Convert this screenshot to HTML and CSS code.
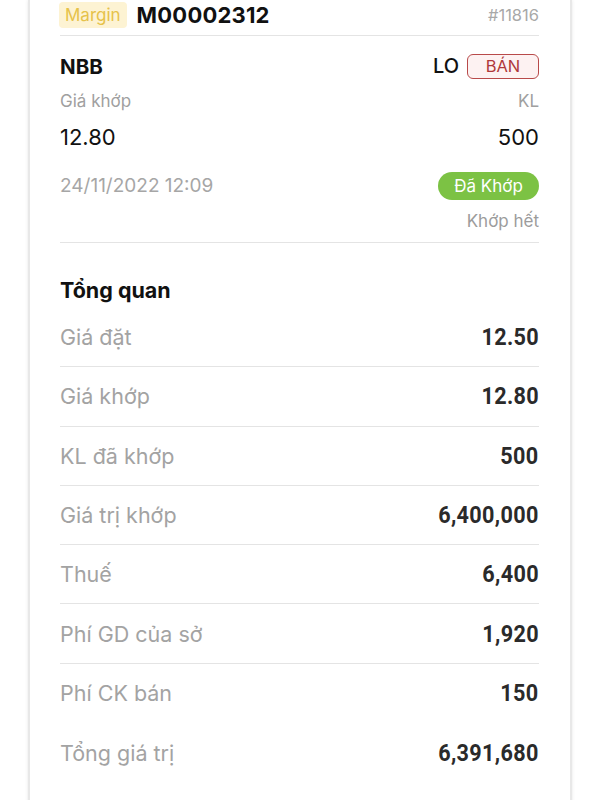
FILE: index.html
```html
<!DOCTYPE html>
<html lang="vi">
<head>
<meta charset="utf-8">
<link rel="stylesheet" href="styles.css">
</head>
<body>
<div class="card">
  <div class="head">
    <div class="head-left">
      <span class="tag-margin">Margin</span>
      <span class="order-id">M00002312</span>
    </div>
    <span class="order-no">#11816</span>
  </div>

  <div class="line sym-row">
    <span class="symbol">NBB</span>
    <div class="side">
      <span class="otype">LO</span>
      <span class="sell">BÁN</span>
    </div>
  </div>
  <div class="line cap-row">
    <span>Giá khớp</span>
    <span>KL</span>
  </div>
  <div class="line num-row">
    <span>12.80</span>
    <span>500</span>
  </div>
  <div class="line date-row">
    <span class="date">24/11/2022 12:09</span>
    <span class="pill">Đã Khớp</span>
  </div>
  <div class="line sub-row">
    <span></span>
    <span>Khớp hết</span>
  </div>

  <div class="overview">
    <h2 class="title">Tổng quan</h2>
    <div class="row"><span class="k">Giá đặt</span><span class="v">12.50</span></div>
    <div class="row"><span class="k">Giá khớp</span><span class="v">12.80</span></div>
    <div class="row"><span class="k">KL đã khớp</span><span class="v">500</span></div>
    <div class="row"><span class="k">Giá trị khớp</span><span class="v">6,400,000</span></div>
    <div class="row"><span class="k">Thuế</span><span class="v">6,400</span></div>
    <div class="row"><span class="k">Phí GD của sở</span><span class="v">1,920</span></div>
    <div class="row noline"><span class="k">Phí CK bán</span><span class="v">150</span></div>
    <div class="row noline"><span class="k">Tổng giá trị</span><span class="v">6,391,680</span></div>
  </div>
</div>
</body>
</html>
```

FILE: styles.css
```css
* { box-sizing: border-box; }
html, body {
  margin: 0;
  padding: 0;
  background: #ffffff;
  overflow: hidden;
}
body {
  font-family: Inter, "Noto Sans", sans-serif;
  color: #111;
}
.card {
  margin: 0 28px 0 28px;
  padding: 0 31px 0 30px;
  height: 820px;
  border-left: 2px solid #e8e8e8;
  border-right: 2px solid #e8e8e8;
  box-shadow: -1px 0 3px rgba(0,0,0,0.05), 1px 0 3px rgba(0,0,0,0.05);
  background: #fff;
}
.head {
  height: 36px;
  display: flex;
  justify-content: space-between;
  align-items: center;
  border-bottom: 1px solid #e4e4e4;
  padding-bottom: 6px;
}
.head-left { display: flex; align-items: center; gap: 10px; }
.tag-margin {
  background: #fdf3d3;
  color: #e6c24a;
  font-size: 17px;
  padding: 2px 6px;
  border-radius: 4px;
  line-height: 22px;
  margin-left: -1px;
}
.order-id {
  font-weight: 700;
  font-size: 22px;
  letter-spacing: 0.2px;
}
.order-no {
  color: #a8a8a8;
  font-size: 16.5px;
}
.line {
  display: flex;
  justify-content: space-between;
  align-items: center;
}
.sym-row { height: 60px; }
.symbol { font-weight: 700; font-size: 20.5px; }
.side { display: flex; align-items: center; gap: 8px; }
.otype { font-size: 20px; font-weight: 500; }
.sell {
  border: 1.5px solid #b84a4a;
  background: #fdf2f2;
  color: #b0383a;
  border-radius: 6px;
  font-size: 16.5px;
  width: 72px;
  height: 25px;
  display: flex;
  align-items: center;
  justify-content: center;
}
.cap-row { height: 10px; color: #a0a0a0; font-size: 17px; }
.num-row { height: 62px; font-size: 22px; }
.date-row { height: 36px; }
.date { color: #a6a6a6; font-size: 19px; margin-top: -2px; }
.pill {
  background: #7cc244;
  color: #fff;
  font-size: 17px;
  width: 101px;
  height: 28px;
  border-radius: 14px;
  display: flex;
  align-items: center;
  justify-content: center;
}
.sub-row {
  height: 39px;
  color: #9c9c9c;
  font-size: 17px;
  border-bottom: 1px solid #e4e4e4;
  padding-bottom: 5px;
}
.title {
  margin: 0;
  height: 65px;
  padding-top: 33px;
  font-size: 21.5px;
  font-weight: 700;
  line-height: 28px;
}
.row {
  height: 59.3px;
  display: flex;
  justify-content: space-between;
  align-items: center;
  border-bottom: 1px solid #e4e4e4;
}
.row.noline { border-bottom: none; }
.k { color: #a3a3a3; font-size: 21.5px; }
.v {
  display: inline-block;
  font-family: Roboto, sans-serif;
  font-weight: 700;
  font-size: 24px;
  color: #2a2a2a;
  transform: scaleX(0.9);
  transform-origin: right center;
  letter-spacing: 0.4px;
}
```
